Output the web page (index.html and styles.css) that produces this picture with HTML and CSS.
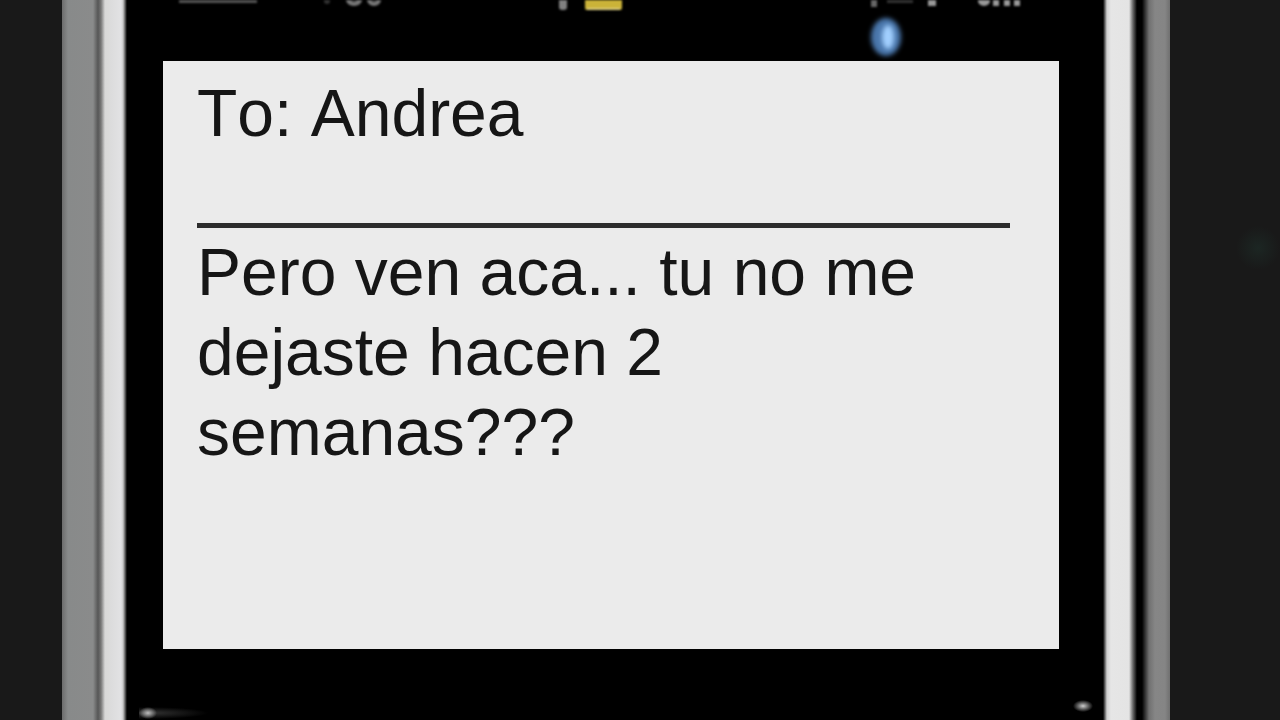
FILE: index.html
```html
<!DOCTYPE html>
<html lang="es">
<head>
    <meta charset="UTF-8">
    <meta name="viewport" content="width=device-width, initial-scale=1.0">
    <title>Mensaje</title>
    <link rel="stylesheet" href="styles.css">
</head>
<body>

    <div class="phone">
        <div class="rail rail-left"></div>

        <div class="screen">
            <!-- status bar, cut off by the top of the window -->
            <div class="status">
                <svg class="status-left" width="240" height="60" viewBox="0 0 240 60" aria-hidden="true">
                    <rect x="16" y="-6" width="78" height="9" fill="#555"/>
                    <circle cx="164" cy="1" r="3" fill="#333"/>
                    <ellipse cx="191" cy="0" rx="8" ry="6" fill="#777"/>
                    <ellipse cx="211" cy="0" rx="7" ry="6" fill="#777"/>
                    <ellipse cx="191" cy="-1" rx="3" ry="3" fill="#333"/>
                    <ellipse cx="211" cy="-1" rx="3" ry="3" fill="#333"/>
                </svg>
                <svg class="status-mail" width="80" height="60" viewBox="0 0 80 60" aria-hidden="true">
                    <rect x="8" y="-6" width="8" height="16" rx="3" fill="#808080"/>
                    <rect x="34" y="-6" width="37" height="16" rx="2" fill="#cbb338"/>
                    <rect x="36" y="8" width="33" height="2" fill="#ddcf80"/>
                </svg>
                <svg class="status-right" width="180" height="60" viewBox="0 0 180 60" aria-hidden="true">
                    <g fill="#999">
                        <rect x="16" y="-4" width="6" height="11" fill="#666"/>
                        <rect x="32" y="-4" width="26" height="7" fill="#333"/>
                        <rect x="73" y="-4" width="8" height="10"/>
                        <ellipse cx="129" cy="1" rx="6" ry="5"/>
                        <rect x="138" y="-4" width="6" height="10"/>
                        <rect x="149" y="-4" width="6" height="10"/>
                        <rect x="159" y="-4" width="6" height="10"/>
                    </g>
                    <ellipse class="glow" cx="31" cy="37" rx="15" ry="19" fill="#4a77ac"/>
                    <ellipse class="glow" cx="33" cy="37" rx="6" ry="12" fill="#a2d0ff"/>
                </svg>
            </div>

            <main class="message">
                <h1 class="to">To: Andrea</h1>
                <p class="text">Pero ven aca... tu no me dejaste hacen 2 semanas???</p>
            </main>

            <div class="bottom">
                <span class="glint glint-left"></span>
                <span class="glint glint-right"></span>
            </div>
        </div>

        <div class="rail rail-right"></div>
    </div>

</body>
</html>
```

FILE: styles.css
```css
body {
    margin: 0;
    background: radial-gradient(circle at right 22px top 248px, #1c2623 0, #191919 22px);
    font-family: "Liberation Sans", Arial, sans-serif;
    color: #161616;
}
.phone {
    display: flex;
    min-height: 100vh;
    box-sizing: border-box;
    padding: 0 110px 0 62px;
}
.rail {
    flex: none;
}
.rail-left {
    width: 65px;
    background: linear-gradient(to right, #6c6c6c 0, #888a8a 6px, #8a8b8b 31px, #565656 36px, #777 39px, #d8d8d8 43px, #e2e2e4 59px, #c8c8c8 61px, #000 65px);
}
.rail-right {
    width: 67px;
    background: linear-gradient(to right, #000 0, #d0d0d0 4px, #e6e6e6 8px, #e4e4e4 26px, #666 30px, #000 34px, #000 39px, #707070 46px, #868686 52px, #858585 62px, #707070 67px);
}
.screen {
    flex: 1;
    display: flex;
    flex-direction: column;
    background-color: #000;
    padding: 0 44px 0 36px;
}
.status {
    display: flex;
    height: 61px;
}
.status svg {
    display: block;
    filter: blur(1px);
}
.status-mail {
    margin-left: 148px;
}
.status-right {
    margin: 0 24px 0 auto;
}
.status .glow {
    filter: blur(2px);
}
.message {
    flex: 1;
    background-color: #ebebeb;
    padding: 12px 49px 0 34px;
}
.to,
.text {
    margin: 0;
    font-size: 66px;
    font-weight: normal;
    font-kerning: none;
    line-height: 80px;
}
.to {
    padding-bottom: 70px;
    border-bottom: 5px solid #2c2c2c;
}
.text {
    padding-top: 4px;
}
.bottom {
    display: flex;
    justify-content: space-between;
    align-items: flex-end;
    height: 71px;
    margin: 0 -34px 0 -24px;
}
.glint {
    height: 14px;
}
.glint-left {
    width: 70px;
    background: radial-gradient(ellipse 9px 6px at 9px 7px, #bbb 0, transparent 100%), radial-gradient(ellipse 60px 6px at 9px 7px, #333 0, #000 100%);
}
.glint-right {
    width: 20px;
    margin-bottom: 7px;
    background: radial-gradient(ellipse 10px 6px, #ccc 0, #000 100%);
}
@media (max-width: 800px) {
    .phone {
        padding: 0;
    }
    .to,
    .text {
        font-size: 40px;
        line-height: 48px;
    }
}
```
